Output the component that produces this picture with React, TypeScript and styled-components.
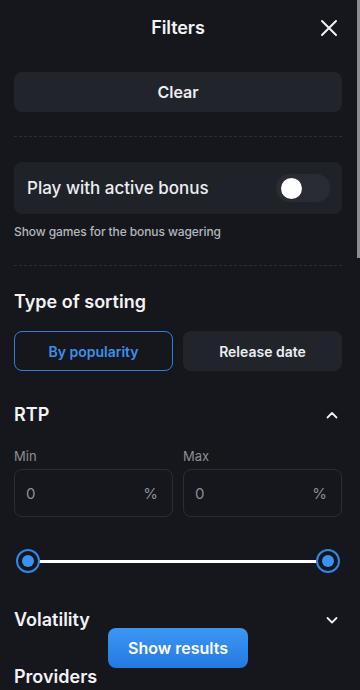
import React from 'react'
import styled, { createGlobalStyle } from 'styled-components'

const GlobalStyle = createGlobalStyle`
  html, body {
    margin: 0;
    padding: 0;
    background: #16171c;
  }
  body {
    font-family: Inter, 'Noto Sans', sans-serif;
    color: #f2f3f5;
  }
  * { box-sizing: border-box; }
`

const Screen = styled.div`
  position: relative;
  width: 360px;
  height: 690px;
  overflow: hidden;
  background: #16171c;
`

const Content = styled.div`
  display: flex;
  flex-direction: column;
  padding: 0 18px 0 14px;
`

const Header = styled.header`
  position: relative;
  height: 54px;
  display: flex;
  align-items: center;
  justify-content: center;
  margin-bottom: 18px;
`

const Title = styled.h1`
  margin: 0;
  font-size: 18px;
  font-weight: 600;
  letter-spacing: -0.1px;
`

const CloseButton = styled.button`
  position: absolute;
  right: 2px;
  top: 17px;
  width: 22px;
  height: 22px;
  padding: 0;
  border: 0;
  background: none;
  color: #f2f3f5;
  display: flex;
  align-items: center;
  justify-content: center;
`

const Button = styled.button<{ $active?: boolean }>`
  height: 40px;
  border-radius: 8px;
  border: 1px solid ${({ $active }) => ($active ? '#2f80dc' : 'transparent')};
  background: ${({ $active }) => ($active ? 'transparent' : '#22242b')};
  color: ${({ $active }) => ($active ? '#3d90ea' : '#eceef1')};
  font-family: inherit;
  font-size: 14px;
  font-weight: 600;
  display: flex;
  align-items: center;
  justify-content: center;
`

const ClearButton = styled(Button)`
  width: 100%;
  font-size: 16px;
`

const Divider = styled.hr`
  margin: 0;
  border: 0;
  border-top: 1px dashed #2c2e35;
`

const BonusCard = styled.div`
  height: 52px;
  border-radius: 8px;
  background: #202229;
  display: flex;
  align-items: center;
  justify-content: space-between;
  padding: 0 12px 0 13px;
`

const BonusLabel = styled.span`
  font-size: 17px;
  font-weight: 500;
  color: #eceef1;
`

const Toggle = styled.div`
  width: 54px;
  height: 28px;
  border-radius: 14px;
  background: #2a2c33;
  padding: 4px 5px;
  display: flex;
  align-items: center;
  &::before {
    content: '';
    width: 21px;
    height: 21px;
    border-radius: 50%;
    background: #ffffff;
  }
`

const Hint = styled.p`
  margin: 10px 0 0;
  font-size: 12px;
  font-weight: 500;
  letter-spacing: -0.1px;
  color: #b4b7be;
`

const SectionTitle = styled.h2`
  margin: 0;
  font-size: 18px;
  font-weight: 600;
  color: #f2f3f5;
`

const SectionRow = styled.div`
  display: flex;
  align-items: center;
  justify-content: space-between;
  padding-right: 2px;
`

const TwoCols = styled.div`
  display: grid;
  grid-template-columns: 1fr 1fr;
  column-gap: 10px;
`

const Field = styled.label`
  display: flex;
  flex-direction: column;
  gap: 5px;
`

const FieldLabel = styled.span`
  font-size: 13px;
  color: #8b8e95;
`

const InputBox = styled.div`
  height: 48px;
  border: 1px solid #2b2d34;
  border-radius: 8px;
  display: flex;
  align-items: center;
  justify-content: space-between;
  padding: 0 14px 0 11px;
  font-size: 15px;
  color: #8b8e95;
`

const Slider = styled.div`
  position: relative;
  height: 26px;
  margin: 0 1px;
  display: flex;
  align-items: center;
`

const Track = styled.div`
  flex: 1;
  height: 3px;
  margin: 0 12px;
  background: #ffffff;
`

const Thumb = styled.div<{ $side: 'left' | 'right' }>`
  position: absolute;
  top: 1px;
  ${({ $side }) => ($side === 'left' ? 'left: 1px;' : 'right: 1px;')}
  width: 24px;
  height: 24px;
  border-radius: 50%;
  border: 2.5px solid #2f86e6;
  background: #16171c;
  display: flex;
  align-items: center;
  justify-content: center;
  &::after {
    content: '';
    width: 12px;
    height: 12px;
    border-radius: 50%;
    background: #3a92f0;
  }
`

const ResultsButton = styled.button`
  position: absolute;
  left: 108px;
  top: 628px;
  width: 140px;
  height: 40px;
  border: 0;
  border-radius: 8px;
  background: linear-gradient(180deg, #3d97f2 0%, #2379e2 100%);
  color: #ffffff;
  font-family: inherit;
  font-size: 16px;
  font-weight: 600;
`

const ScrollThumb = styled.div`
  position: absolute;
  right: 0;
  top: 0;
  width: 3px;
  height: 258px;
  background: #8c8d91;
`

const Gap = styled.div<{ $h: number }>`
  height: ${({ $h }) => $h}px;
  flex: none;
`

const Chevron = ({ up }: { up?: boolean }) => (
  <svg width="16" height="16" viewBox="0 0 16 16" fill="none">
    <path
      d={up ? 'M3.5 10.5 8 6l4.5 4.5' : 'M3.5 6 8 10.5 12.5 6'}
      stroke="#eceef1"
      strokeWidth="1.8"
      strokeLinecap="round"
      strokeLinejoin="round"
    />
  </svg>
)

export default function App() {
  return (
    <Screen>
      <GlobalStyle />
      <Content>
        <Header>
          <Title>Filters</Title>
          <CloseButton aria-label="Close">
            <svg width="18" height="18" viewBox="0 0 18 18" fill="none">
              <path d="M2 2l14 14M16 2 2 16" stroke="#f2f3f5" strokeWidth="2" strokeLinecap="round" />
            </svg>
          </CloseButton>
        </Header>

        <ClearButton>Clear</ClearButton>
        <Gap $h={24} />
        <Divider />
        <Gap $h={25} />

        <BonusCard>
          <BonusLabel>Play with active bonus</BonusLabel>
          <Toggle />
        </BonusCard>
        <Hint>Show games for the bonus wagering</Hint>
        <Gap $h={26} />
        <Divider />
        <Gap $h={25} />

        <SectionTitle>Type of sorting</SectionTitle>
        <Gap $h={19} />
        <TwoCols>
          <Button $active>By popularity</Button>
          <Button>Release date</Button>
        </TwoCols>
        <Gap $h={33} />

        <SectionRow>
          <SectionTitle>RTP</SectionTitle>
          <Chevron up />
        </SectionRow>
        <Gap $h={23} />
        <TwoCols>
          <Field>
            <FieldLabel>Min</FieldLabel>
            <InputBox>
              <span>0</span>
              <span>%</span>
            </InputBox>
          </Field>
          <Field>
            <FieldLabel>Max</FieldLabel>
            <InputBox>
              <span>0</span>
              <span>%</span>
            </InputBox>
          </Field>
        </TwoCols>
        <Gap $h={31} />
        <Slider>
          <Thumb $side="left" />
          <Track />
          <Thumb $side="right" />
        </Slider>
        <Gap $h={35} />

        <SectionRow>
          <SectionTitle>Volatility</SectionTitle>
          <Chevron />
        </SectionRow>
        <Gap $h={36} />
        <SectionTitle>Providers</SectionTitle>
      </Content>

      <ResultsButton>Show results</ResultsButton>
      <ScrollThumb />
    </Screen>
  )
}
